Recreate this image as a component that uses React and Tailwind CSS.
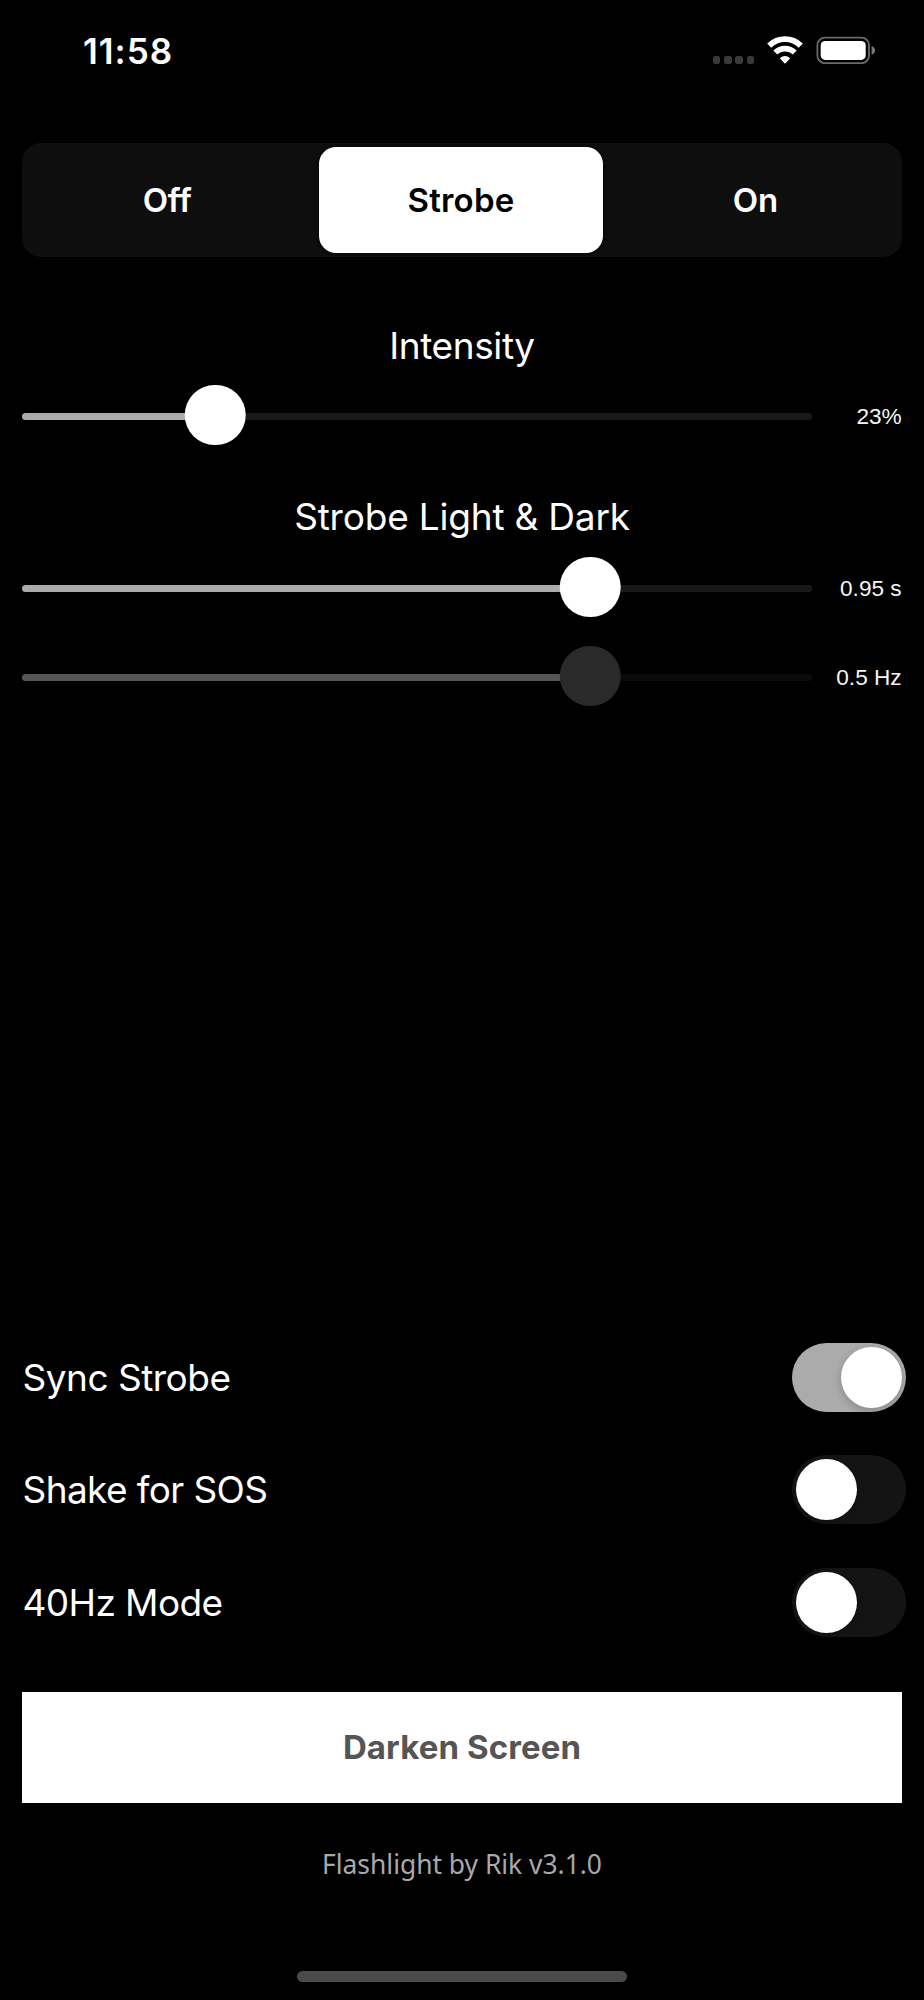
function StatusBar() {
  return (
    <div className="flex h-[143px] items-start justify-between pr-12 pl-[83px]">
      <span className="mt-[30px] text-[35px] leading-[42px] font-semibold tracking-[1px]">11:58</span>
      <div className="mt-[36px] flex h-7">
        <div className="mt-5 mr-[13px] flex gap-[3.7px]">
          <span className="h-[7.5px] w-[7.5px] rounded-[2.5px] bg-[#3a3a3a]"></span>
          <span className="h-[7.5px] w-[7.5px] rounded-[2.5px] bg-[#3a3a3a]"></span>
          <span className="h-[7.5px] w-[7.5px] rounded-[2.5px] bg-[#3a3a3a]"></span>
          <span className="h-[7.5px] w-[7.5px] rounded-[2.5px] bg-[#3a3a3a]"></span>
        </div>
        <svg width="36" height="28" viewBox="0 0 36 28" className="mr-[13px]" fill="none">
          <path d="M2.2 9.6A22.6 22.6 0 0 1 33.8 9.6" stroke="#fff" strokeWidth="5.8" />
          <path d="M8.3 16.5A14 14 0 0 1 27.7 16.5" stroke="#fff" strokeWidth="5.6" />
          <path d="M12.8 22.2Q18 17.6 23.2 22.2L18.6 27.2Q18 27.8 17.4 27.2Z" fill="#fff" />
        </svg>
        <svg width="60" height="28" viewBox="0 0 60 28" fill="none">
          <rect x="1.4" y="1.6" width="51.6" height="25.6" rx="7.5" stroke="#6a6a6a" strokeWidth="1.8" />
          <rect x="4.7" y="4.9" width="45" height="19" rx="4.5" fill="#fff" />
          <path d="M55.6 10V18.8Q59 17.3 59 14.4Q59 11.5 55.6 10Z" fill="#7a7a7a" />
        </svg>
      </div>
    </div>
  );
}

function Segments() {
  return (
    <div className="mx-[22.4px] flex h-[114px] rounded-[19px] bg-[#0e0e0e] py-1 text-[33px] font-semibold">
      <button className="flex w-[296.6px] items-center justify-center pt-[2px] pr-[7px] tracking-[-0.2px]">Off</button>
      <button className="flex h-[105.5px] w-[284px] items-center justify-center rounded-[17px] bg-white pt-[1px] tracking-[0.2px] text-black shadow-[0_0_4px_#000]">
        Strobe
      </button>
      <button className="flex flex-1 items-center justify-center pt-[2px] pl-[6px] tracking-[-0.2px]">On</button>
    </div>
  );
}

function Slider({ position, value, disabled }) {
  return (
    <div className="mx-[22.4px] flex h-[61px] items-center justify-between">
      <div className="relative h-[61px] w-[789.6px]">
        <div
          className={`mt-[29px] h-[7px] rounded-full ${disabled ? "bg-[#0b0b0b]" : "bg-[#19191a]"}`}
        >
          <div
            className={`h-[7px] rounded-full ${disabled ? "bg-[#555555]" : "bg-[#ababab]"}`}
            style={{ width: position }}
          ></div>
        </div>
        <div
          className={`absolute top-[0.5px] h-[60.5px] w-[60.5px] -translate-x-1/2 rounded-full ${disabled ? "bg-[#2a2a2a]" : "bg-white"}`}
          style={{ left: position }}
        ></div>
      </div>
      <span className="mt-1 font-['Liberation_Sans',Arial,sans-serif] text-[22.6px] leading-6 text-[#f5f5f5]">
        {value}
      </span>
    </div>
  );
}

function Toggle({ label, checked, className }) {
  return (
    <div className="flex h-[69px] items-center justify-between pr-[18px] pl-[22.5px]">
      <span className={`mt-px text-[37px] leading-[44px] ${className}`}>{label}</span>
      <div
        className={`flex h-[69px] w-[114px] items-center rounded-full px-1 ${checked ? "justify-end bg-[#ababab]" : "bg-[#141414]"}`}
      >
        <div className="h-[61px] w-[61px] rounded-full bg-white shadow-[0_3px_8px_rgba(0,0,0,0.2)]"></div>
      </div>
    </div>
  );
}

export default function App() {
  return (
    <div className="flex h-[2000px] w-[924px] flex-col overflow-hidden bg-black font-['Inter',sans-serif] text-white">
      <StatusBar />
      <Segments />
      <h2 className="mt-[67px] mb-[16px] text-center text-[37px] leading-[44px] tracking-[-0.4px]">Intensity</h2>
      <Slider position={193} value="23%" />
      <h2 className="mt-[50px] mb-[17px] text-center text-[37px] leading-[44px] tracking-[-0.2px]">
        Strobe Light &amp; Dark
      </h2>
      <Slider position={567.7} value="0.95 s" />
      <div className="mt-[28px]">
        <Slider position={567.7} value="0.5 Hz" disabled />
      </div>
      <div className="mt-[637px] flex flex-col gap-[43.3px]">
        <Toggle label="Sync Strobe" checked className="tracking-[-0.5px]" />
        <Toggle label="Shake for SOS" className="tracking-[-0.6px]" />
        <Toggle label="40Hz Mode" className="tracking-[-0.6px]" />
      </div>
      <button className="mx-[22.4px] mt-[55px] h-[111.5px] shrink-0 bg-white pt-[1px] text-[33px] font-bold tracking-[0.1px] text-[#555555]">
        Darken Screen
      </button>
      <p className="mt-[43px] text-center font-['Noto_Sans',sans-serif] text-[26.4px] leading-9 text-[#a9a9a9]">
        Flashlight by Rik v3.1.0
      </p>
      <div className="mx-auto mt-auto mb-[18px] h-[11px] w-[330px] rounded-full bg-[#4a4a4a]"></div>
    </div>
  );
}
